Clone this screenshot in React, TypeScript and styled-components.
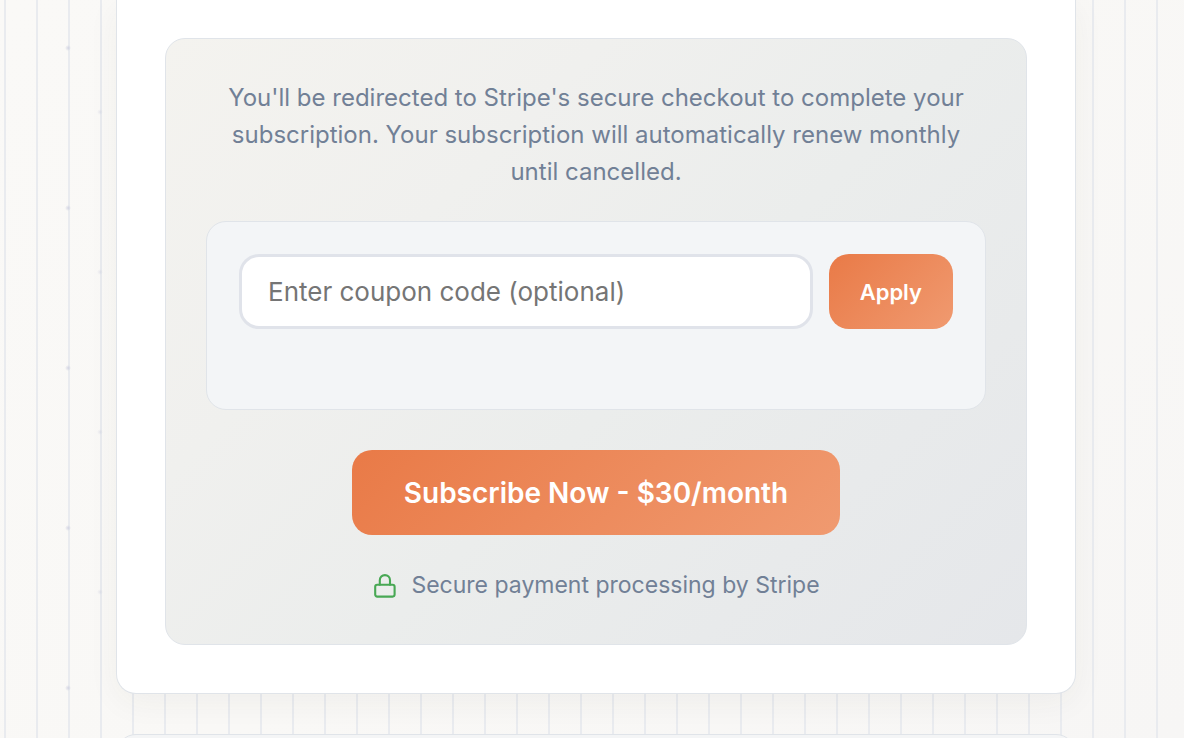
import React from "react";
import styled, { createGlobalStyle } from "styled-components";

const GlobalStyle = createGlobalStyle`
  * { box-sizing: border-box; }
  body {
    margin: 0;
    font-family: Inter, "Liberation Sans", sans-serif;
    overflow: hidden;
  }
`;

const accent = "linear-gradient(135deg, #e97a47 0%, #f09a70 100%)";
const line = "#e0e4e9";

const Page = styled.main`
  min-height: 100vh;
  max-height: 100vh;
  overflow: hidden;
  padding: 0 0 0 8px;
  background:
    radial-gradient(circle at 68px 48px, rgba(190, 192, 215, 0.55) 0, rgba(190, 192, 215, 0.4) 1px, transparent 3px) 0 0 / 160px 160px,
    radial-gradient(circle at 100px 112px, rgba(190, 192, 215, 0.3) 0, rgba(190, 192, 215, 0.2) 1px, transparent 3px) 0 0 / 160px 160px,
    linear-gradient(90deg, transparent 4px, #e9ebef 4px, #e9ebef 6px, transparent 6px) 0 0 / 32px 100%,
    linear-gradient(135deg, #faf9f7 0%, #f9f8f6 50%, #f7f6f5 100%);
`;

const Stack = styled.div`
  max-width: 960px;
  margin: 0 auto;
  display: flex;
  flex-direction: column;
  gap: 40px;
`;

const Card = styled.section`
  padding: 38px 48px 48px;
  background: #fff;
  border: 1px solid ${line};
  border-top: 0;
  border-radius: 0 0 20px 20px;
  box-shadow: 0 8px 32px rgba(60, 50, 30, 0.05);
`;

const NextCard = styled.section`
  height: 120px;
  background: #f4f5f6;
  border: 1px solid ${line};
  border-radius: 20px;
`;

const Panel = styled.form`
  display: flex;
  flex-direction: column;
  align-items: center;
  padding: 40px;
  border: 1px solid ${line};
  border-radius: 20px;
  background: linear-gradient(135deg, #f4f3ef 0%, #f0f0ee 30%, #ebedec 55%, #e5e7ea 100%);
`;

const Notice = styled.p`
  margin: 0 0 31px;
  color: #718096;
  font-size: 24px;
  line-height: 37px;
  text-align: center;
`;

const Coupon = styled.div`
  align-self: stretch;
  display: flex;
  gap: 16px;
  padding: 32px 32px 80px;
  margin-bottom: 40px;
  background: #f3f5f7;
  border: 1px solid ${line};
  border-radius: 20px;
`;

const CouponInput = styled.input`
  flex: 1;
  min-width: 0;
  height: 75px;
  padding: 0 26px;
  border: 3px solid #e0e3ea;
  border-radius: 20px;
  background: #fff;
  color: #2d3748;
  font-family: inherit;
  font-size: 26px;
  &::placeholder { color: #757575; opacity: 1; }
`;

const Button = styled.button<{ $large?: boolean }>`
  height: ${(p) => (p.$large ? 85 : 75)}px;
  padding: 0 ${(p) => (p.$large ? 52 : 31)}px;
  border: 0;
  border-radius: 20px;
  background: ${accent};
  color: #fff;
  font-family: inherit;
  font-size: ${(p) => (p.$large ? 28 : 22)}px;
  font-weight: 600;
  cursor: pointer;
`;

const Secure = styled.div`
  display: flex;
  align-items: center;
  gap: 13px;
  margin-top: 32px;
  color: #718096;
  font-size: 23px;
  line-height: 37px;
`;

const LockIcon = () => (
  <svg width="26" height="26" viewBox="0 0 26 26" fill="none" stroke="#48a854" strokeWidth="2.1" strokeLinecap="round" strokeLinejoin="round" aria-hidden="true">
    <rect x="3.2" y="11.800" width="19.400" height="11.800" rx="2" />
    <path d="M7.800 11.800V7.200a5.100 5.100 0 0 1 10.200 0V11.800" />
  </svg>
);

export default function App() {
  return (
    <>
      <GlobalStyle />
      <Page>
        <Stack>
          <Card>
            <Panel onSubmit={(e) => e.preventDefault()}>
              <Notice>
                You'll be redirected to Stripe's secure checkout to complete your
                subscription. Your subscription will automatically renew monthly until
                cancelled.
              </Notice>
              <Coupon>
                <CouponInput
                  type="text"
                  aria-label="Coupon code"
                  placeholder="Enter coupon code (optional)"
                />
                <Button type="button">Apply</Button>
              </Coupon>
              <Button type="submit" $large>Subscribe Now - $30/month</Button>
              <Secure>
                <LockIcon />
                <span>Secure payment processing by Stripe</span>
              </Secure>
            </Panel>
          </Card>
          <NextCard />
        </Stack>
      </Page>
    </>
  );
}
